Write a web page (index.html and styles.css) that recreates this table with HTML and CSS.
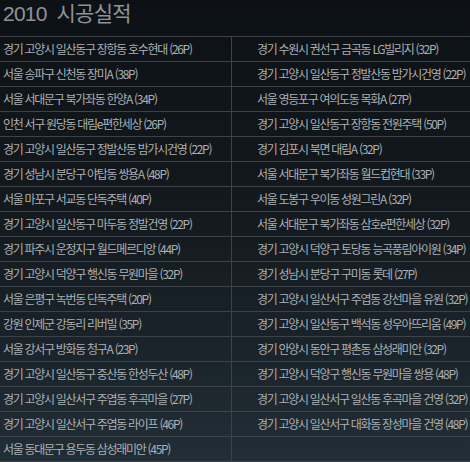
FILE: index.html
```html
<!DOCTYPE html>
<html lang="ko">
<head>
<meta charset="utf-8">
<link rel="stylesheet" href="styles.css">
</head>
<body>
<div class="page">
  <h1 class="title">2010 &nbsp;시공실적</h1>
  <div class="list">
    <div class="cell left">경기 고양시 일산동구 장항동 호수현대 (26P)</div>
    <div class="cell right">경기 수원시 권선구 금곡동 LG빌리지 (32P)</div>
    <div class="cell left">서울 송파구 신천동 장미A (38P)</div>
    <div class="cell right">경기 고양시 일산동구 정발산동 밤가시건영 (22P)</div>
    <div class="cell left">서울 서대문구 북가좌동 한양A (34P)</div>
    <div class="cell right">서울 영등포구 여의도동 목화A (27P)</div>
    <div class="cell left">인천 서구 원당동 대림e편한세상 (26P)</div>
    <div class="cell right">경기 고양시 일산동구 장항동 전원주택 (50P)</div>
    <div class="cell left">경기 고양시 일산동구 정발산동 밤가시건영 (22P)</div>
    <div class="cell right">경기 김포시 북면 대림A (32P)</div>
    <div class="cell left">경기 성남시 분당구 야탑동 쌍용A (48P)</div>
    <div class="cell right">서울 서대문구 북가좌동 월드컵현대 (33P)</div>
    <div class="cell left">서울 마포구 서교동 단독주택 (40P)</div>
    <div class="cell right">서울 도봉구 우이동 성원그린A (32P)</div>
    <div class="cell left">경기 고양시 일산동구 마두동 정발건영 (22P)</div>
    <div class="cell right">서울 서대문구 북가좌동 삼호e편한세상 (32P)</div>
    <div class="cell left">경기 파주시 운정지구 월드메르디앙 (44P)</div>
    <div class="cell right">경기 고양시 덕양구 토당동 능곡풍림아이원 (34P)</div>
    <div class="cell left">경기 고양시 덕양구 행신동 무원마을 (32P)</div>
    <div class="cell right">경기 성남시 분당구 구미동 롯데 (27P)</div>
    <div class="cell left">서울 은평구 녹번동 단독주택 (20P)</div>
    <div class="cell right">경기 고양시 일산서구 주엽동 강선마을 유원 (32P)</div>
    <div class="cell left">강원 인제군 강동리 리버빌 (35P)</div>
    <div class="cell right">경기 고양시 일산동구 백석동 성우아뜨리움 (49P)</div>
    <div class="cell left">서울 강서구 방화동 청구A (23P)</div>
    <div class="cell right">경기 안양시 동안구 평촌동 삼성래미안 (32P)</div>
    <div class="cell left">경기 고양시 일산동구 중산동 한성두산 (48P)</div>
    <div class="cell right">경기 고양시 덕양구 행신동 무원마을 쌍용 (48P)</div>
    <div class="cell left">경기 고양시 일산서구 주엽동 후곡마을 (27P)</div>
    <div class="cell right">경기 고양시 일산서구 일산동 후곡마을 건영 (32P)</div>
    <div class="cell left">경기 고양시 일산서구 주엽동 라이프 (46P)</div>
    <div class="cell right">경기 고양시 일산서구 대화동 장성마을 건영 (48P)</div>
    <div class="cell left">서울 동대문구 용두동 삼성래미안 (45P)</div>
    <div class="cell right"></div>
  </div>
</div>
</body>
</html>
```

FILE: styles.css
```css
html, body {
  margin: 0;
  padding: 0;
}
body {
  width: 470px;
  height: 462px;
  overflow: hidden;
  background: linear-gradient(to bottom, #0d1115 0%, #12181c 40%, #1b252c 80%, #222e36 100%);
  font-family: "Noto Sans CJK KR", "Noto Sans", sans-serif;
}
.page {
  display: flex;
  flex-direction: column;
}
.title {
  margin: 0;
  height: 36px;
  padding-left: 3px;
  font-family: "Liberation Sans", "Noto Sans CJK KR", sans-serif;
  font-size: 21px;
  font-weight: 400;
  line-height: 28px;
  letter-spacing: -0.8px;
  color: #8f9397;
}
.list {
  display: grid;
  grid-template-columns: 232px 238px;
  border-top: 1px solid #3c4247;
}
.cell {
  height: 24px;
  line-height: 24px;
  border-bottom: 1px solid #3c4247;
  font-size: 12px;
  letter-spacing: -1.3px;
  color: #abafb3;
  white-space: nowrap;
  overflow: hidden;
}
.left {
  border-right: 1px solid #3c4247;
  padding-left: 3px;
}
.right {
  padding-left: 25px;
}
```
